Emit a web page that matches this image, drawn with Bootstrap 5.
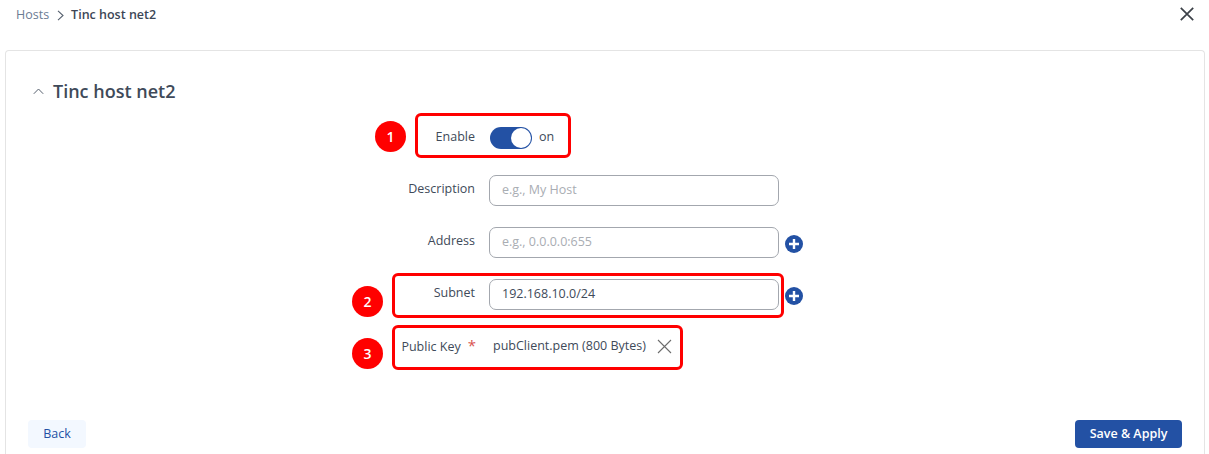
<!DOCTYPE html>
<html lang="en">

<head>
  <meta charset="UTF-8">
  <title>Tinc host net2</title>
  <link href="https://cdn.jsdelivr.net/npm/bootstrap@5.3.3/dist/css/bootstrap.min.css" rel="stylesheet">
  <style>
    html, body {
      height: 454px;
      overflow: hidden;
    }

    body {
      font-family: "Open Sans", sans-serif;
      font-size: 12.5px;
      color: #404a59;
      background: #fff;
      position: relative;
    }

    .crumb-bar {
      height: 50px;
      padding: 0 15px 20px 16px;
    }

    .crumb-link {
      color: #6b7c93;
    }

    .crumb-current {
      color: #3c4656;
      font-weight: 600;
      margin-left: -1px;
    }

    .close-mark {
      margin-bottom: 2px;
    }

    .sheet {
      margin: 0 4px 0 5px;
      height: 404px;
      border: 1px solid #e4e4e4;
      border-bottom: 0;
      border-radius: 4px 4px 0 0;
      padding: 28px 22px 0 22px;
    }

    .title-arrow {
      margin: 0 9px 0 5px;
    }

    .sheet-title {
      font-size: 18px;
      font-weight: 600;
      line-height: 24px;
      margin: 0;
      color: #404a59;
    }

    .form-area {
      height: 317px;
      padding-top: 9px;
    }

    .form-line {
      height: 52px;
    }

    .line-label {
      width: 461px;
      text-align: right;
      padding-right: 14px;
      margin-bottom: 2px;
      flex-shrink: 0;
    }

    .key-label {
      padding-right: 13px;
    }

    .line-input {
      width: 290px;
      height: 31px;
      border: 1px solid #a3a7ae;
      border-radius: 7px;
      padding: 0 12px 2px;
      font-size: 12.5px;
      color: #404a59;
      box-shadow: none;
    }

    .line-input::placeholder {
      color: #a9adb3;
    }

    .plus-mark {
      margin: 4px 0 0 6px;
    }

    .switch-track {
      width: 42px;
      height: 22px;
      border-radius: 11px;
      background: #2351a4;
      padding: 1px;
      margin: 0 7px 0 1px;
    }

    .switch-knob {
      width: 20px;
      height: 20px;
      border-radius: 50%;
      background: #fff;
    }

    .switch-word {
      margin-bottom: 2px;
    }

    .required-star {
      color: #d9534f;
      font-size: 15px;
      margin-left: 7px;
    }

    .file-name {
      margin-left: -4px;
      margin-right: 11px;
    }

    .back-btn {
      width: 58px;
      height: 28px;
      padding: 0;
      font-size: 12.5px;
      color: #2351a4;
      background: #f3f8ff;
      border: 0;
      border-radius: 4px;
    }

    .save-btn {
      width: 107px;
      height: 28px;
      padding: 0;
      font-size: 12.5px;
      font-weight: 600;
      color: #fff;
      background: #2351a4;
      border: 0;
      border-radius: 4px;
    }

    .note-box {
      position: absolute;
      border: 3px solid #f00;
      border-radius: 6px;
      pointer-events: none;
    }

    .note-num {
      position: absolute;
      width: 31px;
      height: 31px;
      border-radius: 50%;
      background: #f00;
      color: #fff;
      font-size: 14px;
      font-weight: 600;
    }

    .box-one { left: 415px; top: 113px; width: 156px; height: 45px; }
    .box-two { left: 392px; top: 273px; width: 392px; height: 45px; }
    .box-three { left: 392px; top: 325px; width: 291px; height: 45px; }
    .num-one { left: 375px; top: 121px; }
    .num-two { left: 352px; top: 286px; }
    .num-three { left: 352px; top: 338px; }
  </style>
</head>

<body>

  <div class="crumb-bar d-flex align-items-center justify-content-between">
    <div class="d-flex align-items-center">
      <span class="crumb-link">Hosts</span>
      <svg class="mx-2" width="7" height="11" viewBox="0 0 7 11" fill="none" stroke="#56606e" stroke-width="1.1"><path d="M1 .8 6 5.5 1 10.2"/></svg>
      <span class="crumb-current">Tinc host net2</span>
    </div>
    <svg class="close-mark" width="14" height="14" viewBox="0 0 14 14" fill="none" stroke="#3c4148" stroke-width="1.7"><path d="M.8.8l12.4 12.4M13.2.8.8 13.2"/></svg>
  </div>

  <div class="sheet">
    <div class="d-flex align-items-center">
      <svg class="title-arrow" width="11" height="7" viewBox="0 0 11 7" fill="none" stroke="#56606e" stroke-width="1"><path d="M.8 5.8 5.5 1l4.7 4.8"/></svg>
      <h2 class="sheet-title">Tinc host net2</h2>
    </div>

    <div class="form-area">
      <div class="form-line d-flex align-items-center">
        <label class="line-label">Enable</label>
        <div class="switch-track d-flex justify-content-end"><div class="switch-knob"></div></div>
        <span class="switch-word">on</span>
      </div>
      <div class="form-line d-flex align-items-center">
        <label class="line-label">Description</label>
        <input class="form-control line-input" type="text" placeholder="e.g., My Host">
      </div>
      <div class="form-line d-flex align-items-center">
        <label class="line-label">Address</label>
        <input class="form-control line-input" type="text" placeholder="e.g., 0.0.0.0:655">
        <svg class="plus-mark" width="18" height="18" viewBox="0 0 18 18"><circle cx="9" cy="9" r="9" fill="#2351a4"/><path d="M9 4v10M4 9h10" stroke="#fff" stroke-width="2.4"/></svg>
      </div>
      <div class="form-line d-flex align-items-center">
        <label class="line-label">Subnet</label>
        <input class="form-control line-input" type="text" value="192.168.10.0/24">
        <svg class="plus-mark" width="18" height="18" viewBox="0 0 18 18"><circle cx="9" cy="9" r="9" fill="#2351a4"/><path d="M9 4v10M4 9h10" stroke="#fff" stroke-width="2.4"/></svg>
      </div>
      <div class="form-line d-flex align-items-center">
        <label class="line-label key-label">Public Key<span class="required-star">*</span></label>
        <span class="file-name ms-1">pubClient.pem (800 Bytes)</span>
        <svg width="15" height="15" viewBox="0 0 15 15" fill="none" stroke="#6c6c6c" stroke-width="1.1"><path d="M1 1l13 13M14 1 1 14"/></svg>
      </div>
    </div>

    <div class="d-flex justify-content-between">
      <button class="btn back-btn" type="button">Back</button>
      <button class="btn save-btn" type="button">Save &amp; Apply</button>
    </div>
  </div>

  <!-- numbered red callouts drawn over the form -->
  <div class="note-box box-one"></div>
  <div class="note-box box-two"></div>
  <div class="note-box box-three"></div>
  <div class="note-num num-one d-flex align-items-center justify-content-center">1</div>
  <div class="note-num num-two d-flex align-items-center justify-content-center">2</div>
  <div class="note-num num-three d-flex align-items-center justify-content-center">3</div>

  <script src="https://cdn.jsdelivr.net/npm/bootstrap@5.3.3/dist/js/bootstrap.bundle.min.js"></script>
</body>

</html>
